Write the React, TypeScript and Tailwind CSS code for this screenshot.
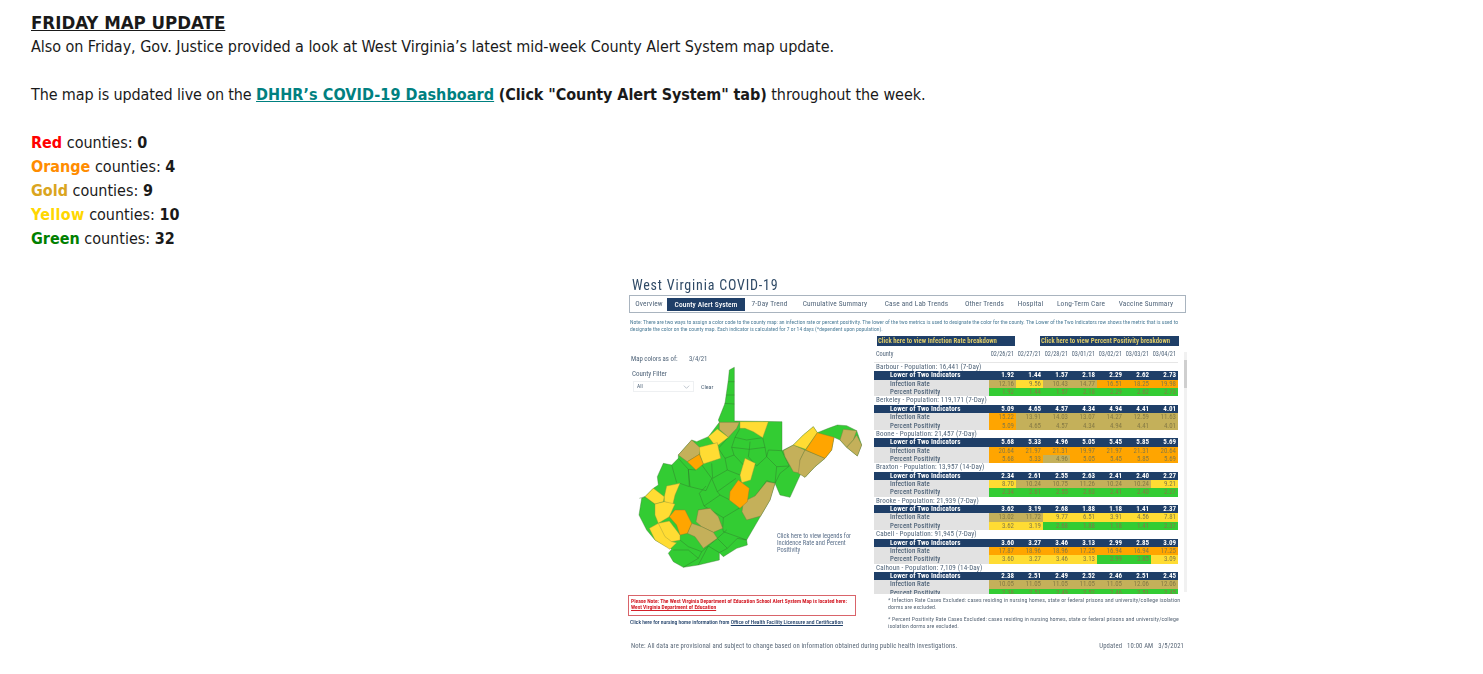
const GOLD = "bg-[#c4b05a]";
const YEL = "bg-[#ffdc33]";
const ORG = "bg-[#ffa500]";
const GRN = "bg-[#33cc33]";

const dates = ["02/26/21", "02/27/21", "02/28/21", "03/01/21", "03/02/21", "03/03/21", "03/04/21"];

type County = {
  name: string;
  lower: string[];
  rate: string[];
  rateColors: string[];
  pos: string[];
  posColors: string[];
};

const counties: County[] = [
  {
    name: "Barbour - Population: 16,441 (7-Day)",
    lower: ["1.92", "1.44", "1.57", "2.18", "2.29", "2.62", "2.73"],
    rate: ["12.16", "9.56", "10.43", "14.77", "16.51", "18.25", "19.98"],
    rateColors: [GOLD, YEL, GOLD, GOLD, ORG, ORG, ORG],
    pos: ["1.92", "1.44", "1.57", "2.18", "2.29", "2.62", "2.73"],
    posColors: [GRN, GRN, GRN, GRN, GRN, GRN, GRN],
  },
  {
    name: "Berkeley - Population: 119,171 (7-Day)",
    lower: ["5.09", "4.65", "4.57", "4.34", "4.94", "4.41", "4.01"],
    rate: ["15.22", "13.91", "14.03", "13.07", "14.27", "12.59", "11.63"],
    rateColors: [ORG, GOLD, GOLD, GOLD, GOLD, GOLD, GOLD],
    pos: ["5.09", "4.65", "4.57", "4.34", "4.94", "4.41", "4.01"],
    posColors: [ORG, GOLD, GOLD, GOLD, GOLD, GOLD, GOLD],
  },
  {
    name: "Boone - Population: 21,457 (7-Day)",
    lower: ["5.68", "5.33", "4.96", "5.05", "5.45", "5.85", "5.69"],
    rate: ["20.64", "21.97", "21.31", "19.97", "21.97", "21.31", "20.64"],
    rateColors: [ORG, ORG, ORG, ORG, ORG, ORG, ORG],
    pos: ["5.68", "5.33", "4.96", "5.05", "5.45", "5.85", "5.69"],
    posColors: [ORG, ORG, GOLD, ORG, ORG, ORG, ORG],
  },
  {
    name: "Braxton - Population: 13,957 (14-Day)",
    lower: ["2.34", "2.61", "2.55", "2.63", "2.41", "2.40", "2.27"],
    rate: ["8.70", "10.24", "10.75", "11.26", "10.24", "10.24", "9.21"],
    rateColors: [YEL, GOLD, GOLD, GOLD, GOLD, GOLD, YEL],
    pos: ["2.34", "2.61", "2.55", "2.63", "2.41", "2.40", "2.27"],
    posColors: [GRN, GRN, GRN, GRN, GRN, GRN, GRN],
  },
  {
    name: "Brooke - Population: 21,939 (7-Day)",
    lower: ["3.62", "3.19", "2.68", "1.88", "1.18", "1.41", "2.37"],
    rate: ["13.02", "11.72", "9.77", "6.51", "3.91", "4.56", "7.81"],
    rateColors: [GOLD, GOLD, YEL, YEL, YEL, YEL, YEL],
    pos: ["3.62", "3.19", "2.68", "1.88", "1.18", "1.41", "2.37"],
    posColors: [YEL, YEL, GRN, GRN, GRN, GRN, GRN],
  },
  {
    name: "Cabell - Population: 91,945 (7-Day)",
    lower: ["3.60", "3.27", "3.46", "3.13", "2.99", "2.85", "3.09"],
    rate: ["17.87", "18.96", "18.96", "17.25", "16.94", "16.94", "17.25"],
    rateColors: [ORG, ORG, ORG, ORG, ORG, ORG, ORG],
    pos: ["3.60", "3.27", "3.46", "3.13", "2.99", "2.85", "3.09"],
    posColors: [YEL, YEL, YEL, YEL, GRN, GRN, YEL],
  },
  {
    name: "Calhoun - Population: 7,109 (14-Day)",
    lower: ["2.38", "2.51", "2.49", "2.52", "2.46", "2.51", "2.45"],
    rate: ["10.05", "11.05", "11.05", "11.05", "11.05", "12.06", "12.06"],
    rateColors: [GOLD, GOLD, GOLD, GOLD, GOLD, GOLD, GOLD],
    pos: ["2.38", "2.51", "2.49", "2.52", "2.46", "2.51", "2.45"],
    posColors: [GRN, GRN, GRN, GRN, GRN, GRN, GRN],
  },
];

const tabs = [
  { label: "Overview", w: "w-[36px]" },
  { label: "County Alert System", w: "w-[78px]", active: true },
  { label: "7-Day Trend", w: "w-[49px]" },
  { label: "Cumulative Summary", w: "w-[82px]" },
  { label: "Case and Lab Trends", w: "w-[81px]" },
  { label: "Other Trends", w: "w-[55px]" },
  { label: "Hospital", w: "w-[37px]" },
  { label: "Long-Term Care", w: "w-[64px]" },
  { label: "Vaccine Summary", w: "w-[66px]" },
];

const outline =
  "313,22 313,183 456,185 456,272 490,255 520,225 550,200 562,218 595,205 622,195 650,197 680,212 695,255 682,288 650,262 630,240 612,232 605,270 585,295 555,320 525,352 512,342 480,412 450,405 435,370 420,420 392,468 385,480 350,540 352,555 320,565 280,590 268,578 268,600 205,615 160,622 130,605 115,580 125,568 75,540 50,510 27,465 35,415 45,410 70,385 85,375 82,350 100,310 125,315 145,295 145,285 185,240 200,245 235,230 268,187 265,180 285,130 295,60 298,30";

const gold = [
  "268,187 328,187 320,205 295,232 268,208",
  "145,285 185,240 212,265 208,283 172,305",
  "410,365 435,370 420,420 392,468 350,480 336,455 340,425 375,408",
  "490,255 525,270 510,300 510,340 490,335 465,290 460,272",
  "525,270 585,295 555,320 525,352 505,340 510,300",
  "630,240 640,208 680,212 670,240 650,262",
  "670,240 680,225 695,255 682,288 650,262",
  "205,450 240,445 265,470 278,505 250,517 215,500 198,485",
  "185,490 215,500 250,517 262,535 220,565 195,530 172,520",
];
const yellow = [
  "330,185 415,185 398,233 370,215 345,205 330,205",
  "235,230 262,207 295,232 265,255 250,250",
  "208,262 262,248 272,295 220,312 210,285",
  "345,295 376,310 362,360 335,368 330,345",
  "490,255 520,225 550,200 562,218 527,268",
  "45,410 70,385 103,410 100,425 75,432",
  "103,410 110,378 150,370 135,405 128,435 103,425",
  "75,432 103,425 135,432 118,470 85,490 75,465",
  "58,505 85,490 115,505 125,545 140,548 120,568 75,540",
  "85,490 118,483 150,525 150,540 125,545 105,530",
];
const orange = [
  "172,305 208,283 220,312 198,330",
  "325,360 358,385 352,425 330,445 298,420 300,395",
  "527,270 562,218 612,232 605,270 585,295",
  "118,470 135,450 165,450 185,490 172,520 150,525 140,495",
];
const borders = [
  "295,65 313,65",
  "288,105 313,105",
  "283,130 313,132",
  "330,205 315,232 350,240 398,233",
  "295,232 265,265 285,295 312,285 305,262 315,232",
  "360,245 358,268 405,262 398,233",
  "405,262 410,290 380,318 355,290 358,268 305,262",
  "410,290 415,270 455,272 478,318 440,320 410,290",
  "440,320 435,370 410,362 376,408",
  "478,318 450,340 435,370",
  "312,285 345,320 330,345 292,330 285,295",
  "245,310 248,355 292,330",
  "212,310 245,355 228,392 180,380 175,328 198,330",
  "145,295 175,328 178,380 150,370",
  "125,315 140,368",
  "318,355 262,395 245,355",
  "262,395 270,405 222,438 208,400 228,378",
  "300,420 270,405",
  "222,438 280,473 335,440",
  "280,473 278,505 280,515 350,540",
  "240,445 205,450",
  "28,415 45,410 75,432",
  "150,540 175,560 215,575 235,558 262,535",
  "290,510 262,535 292,565 322,535 350,540",
  "292,565 268,578 235,558 205,615",
  "215,575 205,595 160,622",
  "130,570 175,570 205,595",
];

function WvMap() {
  return (
    <svg viewBox="0 0 720 660" className="w-[240px] h-[220px]">
      <polygon points={outline} fill="#33cc33" stroke="#3f7a34" strokeWidth="1.2" />
      {borders.map((b) => (
        <polyline key={b} points={b} fill="none" stroke="#2f6f2c" strokeWidth="1.2" />
      ))}
      {gold.map((p) => (
        <polygon key={p} points={p} fill="#c4b05a" stroke="#7a7442" strokeWidth="1.2" />
      ))}
      {yellow.map((p) => (
        <polygon key={p} points={p} fill="#ffdc33" stroke="#94923c" strokeWidth="1.2" />
      ))}
      {orange.map((p) => (
        <polygon key={p} points={p} fill="#ffa500" stroke="#947430" strokeWidth="1.2" />
      ))}
    </svg>
  );
}

function CountyRows({ county }: { county: County }) {
  return (
    <>
      <div className="h-[8.36px] leading-[8.36px] pl-[2px] text-[#51657a] text-[7.1px] tracking-[0.12px] whitespace-nowrap">{county.name}</div>
      <div className="flex h-[8.36px] leading-[8.36px] bg-[#1f3f68] text-white font-bold text-[7px]">
        <div className="w-[115px] pl-[16px] text-[7.1px] tracking-[0.12px]">Lower of Two Indicators</div>
        {county.lower.map((v, i) => (
          <div key={i} className="w-[27px] text-right pr-[2px]">{v}</div>
        ))}
      </div>
      <div className="flex h-[8.36px] leading-[8.36px] text-[6.9px]">
        <div className="w-[115px] pl-[16px] bg-[#e2e2e2] text-[#51657a] font-medium tracking-[0.12px]">Infection Rate</div>
        {county.rate.map((v, i) => (
          <div key={i} className={`w-[27px] text-right pr-[2px] text-[#857a45] ${county.rateColors[i]}`}>{v}</div>
        ))}
      </div>
      <div className="flex h-[8.36px] leading-[8.36px] text-[6.9px]">
        <div className="w-[115px] pl-[16px] bg-[#e2e2e2] text-[#51657a] font-medium tracking-[0.12px]">Percent Positivity</div>
        {county.pos.map((v, i) => (
          <div key={i} className={`w-[27px] text-right pr-[2px] text-[#857a45] ${county.posColors[i]}`}>{v}</div>
        ))}
      </div>
    </>
  );
}

function Dashboard() {
  return (
    <div className="w-[570px] ml-[597px] mt-[19px] blur-[0.5px] font-['Roboto',sans-serif] text-[#51657a]">
      <div className="h-[25px] pl-[4px] pt-[6px] text-[14px] leading-[18px] tracking-[0.8px] text-[#2f4a66]">West Virginia COVID-19</div>
      <div className="flex items-center h-[18px] w-[557px] ml-[1px] pl-[1px] border border-[#a9b4bf] text-[7.4px] tracking-[0.15px] whitespace-nowrap">
        {tabs.map((t) =>
          t.active ? (
            <div key={t.label} className={`${t.w} h-[13px] leading-[13px] text-center bg-[#1f3f68] text-white font-medium`}>{t.label}</div>
          ) : (
            <div key={t.label} className={`${t.w} text-center`}>{t.label}</div>
          )
        )}
      </div>
      <div className="mt-[6px] pl-[2px] h-[15px] text-[5.6px] leading-[6.5px] text-[#4f7f9a] whitespace-nowrap">
        <div>Note: There are two ways to assign a color code to the county map: an infection rate or percent positivity. The lower of the two metrics is used to designate the color for the county. The Lower of the Two Indicators row shows the metric that is used to</div>
        <div>designate the color on the county map. Each indicator is calculated for 7 or 14 days (*dependent upon population).</div>
      </div>
      <div className="flex">
        <div className="w-[246px] pl-[2px]">
          <div className="relative h-[261px]">
            <div className="pt-[21px] flex text-[6.8px] leading-[8px]">
              <span className="ml-[1px] w-[58px]">Map colors as of:</span>
              <span>3/4/21</span>
            </div>
            <div className="mt-[7px] ml-[2px] text-[7px] leading-[8px]">County Filter</div>
            <div className="flex items-center mt-[3px] ml-[3px]">
              <div className="flex items-center justify-between w-[61px] h-[11px] px-[3px] border border-[#eef0f2] text-[5.5px] leading-[9px]">
                <span>All</span>
                <svg viewBox="0 0 10 6" className="w-[7px] h-[4px]"><path d="M1 1l4 4 4-4" fill="none" stroke="#8896a5" strokeWidth="0.8" /></svg>
              </div>
              <span className="ml-[7px] text-[6px] leading-[11px]">Clear</span>
            </div>
            <div className="absolute left-0 top-[26px]"><WvMap /></div>
            <div className="absolute left-[147px] top-[199px] text-[6.4px] leading-[7px] text-[#5a6f8a] whitespace-nowrap">
              <div>Click here to view legends for</div>
              <div>Incidence Rate and Percent</div>
              <div>Positivity</div>
            </div>
          </div>
          <div className="-ml-[2px] w-[228px] h-[21px] px-[2px] pt-[2px] border border-[#d9646a] text-[#d4202a] font-bold text-[5.5px] leading-[6.2px] whitespace-nowrap">
            <div>Please Note: The West Virginia Department of Education School Alert System Map is located here:</div>
            <div className="underline">West Virginia Department of Education</div>
          </div>
          <div className="mt-[3px] text-[5.55px] leading-[7px] font-medium text-[#1f3f68] whitespace-nowrap">
            Click here for nursing home information from <span className="underline">Office of Health Facility Licensure and Certification</span>
          </div>
        </div>
        <div className="w-[320px]">
          <div className="flex pt-[2px] text-[6.8px] leading-[10px] font-bold text-[#d9c768] whitespace-nowrap">
            <div className="ml-[3px] w-[138px] pl-[1px] bg-[#1f3f68]">Click here to view Infection Rate breakdown</div>
            <div className="ml-[25px] w-[139px] pl-[1px] bg-[#1f3f68]">Click here to view Percent Positivity breakdown</div>
          </div>
          <div className="flex items-start">
            <div className="w-[304px]">
              <div className="flex h-[17px] pt-[4px] text-[6.3px] leading-[9px] border-b border-[#e6e6e6]">
                <div className="w-[115px] pl-[2px]">County</div>
                {dates.map((d) => (
                  <div key={d} className="w-[27px] text-right pr-[2px]">{d}</div>
                ))}
              </div>
              <div className="h-[231px] overflow-hidden">
                {counties.map((c) => (
                  <CountyRows key={c.name} county={c} />
                ))}
              </div>
            </div>
            <div className="ml-[6px] mt-[6px] w-[3px] h-[240px] bg-[#f1f1f1]">
              <div className="w-[3px] h-[28px] mt-[8px] bg-[#cfcfcf]" />
            </div>
          </div>
          <div className="mt-[3px] ml-[14px] w-[298px] text-[5.85px] leading-[7.3px] tracking-[0.1px] text-[#5a6878]">
            <div>* Infection Rate Cases Excluded: cases residing in nursing homes, state or federal prisons and university/college isolation dorms are excluded.</div>
            <div className="mt-[4px]">* Percent Positivity Rate Cases Excluded: cases residing in nursing homes, state or federal prisons and university/college isolation dorms are excluded.</div>
          </div>
        </div>
      </div>
      <div className="flex justify-between mt-[12px] w-[556px] pl-[3px] text-[6.7px] leading-[8px] tracking-[0.12px] text-[#5a6878] whitespace-nowrap">
        <span>Note: All data are provisional and subject to change based on information obtained during public health investigations.</span>
        <span className="whitespace-pre">Updated   10:00 AM   3/5/2021</span>
      </div>
    </div>
  );
}

export default function App() {
  return (
    <div className="min-h-[674px] bg-white pt-[11px] pl-[31px] text-[#1a1a1a] text-[16px] leading-[24px] font-['DejaVu_Sans',sans-serif] font-stretch-condensed overflow-hidden">
      <div className="font-bold underline text-[18.5px]">FRIDAY MAP UPDATE</div>
      <div className="tracking-[-0.045px]">Also on Friday, Gov. Justice provided a look at West Virginia’s latest mid-week County Alert System map update.</div>
      <div className="mt-[24px]">
        <span className="tracking-[-0.13px]">The map is updated live on the </span>
        <a className="font-bold underline text-[#008080] tracking-[0.08px]">DHHR’s COVID-19 Dashboard</a>{" "}
        <span className="font-bold tracking-[-0.08px]">(Click "County Alert System" tab)</span>{" "}
        <span className="tracking-[-0.05px]">throughout the week.</span>
      </div>
      <div className="mt-[24px]"><span className="font-bold text-[#ff0000]">Red</span> counties: <span className="font-bold">0</span></div>
      <div><span className="font-bold text-[#ff8c00]">Orange</span> counties: <span className="font-bold">4</span></div>
      <div><span className="font-bold text-[#daa520]">Gold</span> counties: <span className="font-bold">9</span></div>
      <div><span className="font-bold text-[#ffd700] tracking-[0.3px]">Yellow</span> counties: <span className="font-bold">10</span></div>
      <div><span className="font-bold text-[#008000]">Green</span> counties: <span className="font-bold">32</span></div>
      <Dashboard />
    </div>
  );
}
